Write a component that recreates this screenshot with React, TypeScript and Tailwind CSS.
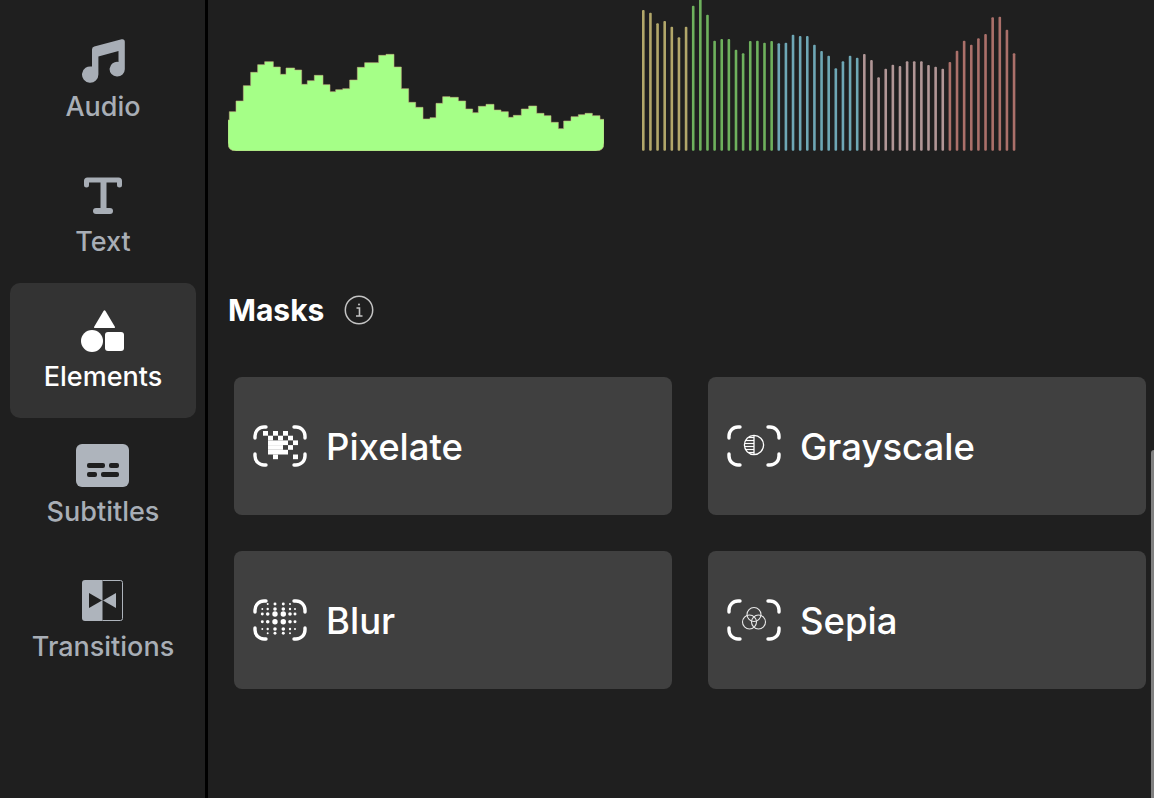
const wave: [number, number][] = [[28,240],[48,215],[70,183],[92,137],[113,97],[134,74],[160,65],[181,81],[198,103],[224,84],[245,90],[262,133],[283,122],[309,106],[330,134],[347,155],[368,149],[389,146],[412,120],[434,82],[476,68],[498,46],[522,43],[544,81],[566,146],[587,187],[609,202],[630,237],[648,233],[668,190],[690,170],[715,172],[737,183],[758,207],[775,218],[798,199],[822,193],[843,210],[865,215],[880,232],[904,226],[926,207],[950,198],[972,220],[993,227],[1015,247],[1031,266],[1053,243],[1075,230],[1095,224],[1117,220],[1140,227],[1152,238]];
const wx = (z: number) => ((z - 24) / 3).toFixed(2);
const wy = (z: number) => (40 + z / 3).toFixed(2);
const wavePath = `M0 143 V${wy(wave[0][1])} ` + wave.map(([x, t]) => `V${wy(t)} H${wx(x)}`).join(" ") + " V143 Q376 151 368 151 H8 Q0 151 0 143 Z";

const barTops = [30,38,70,63,80,112,80,17,-6,44,122,117,117,149,160,123,122,128,123,130,128,104,108,108,134,153,167,205,184,167,173,162,180,232,206,194,198,184,184,184,195,200,206,186,152,122,134,115,102,52,50,89,160];
const barColor = (i: number) => (i < 7 ? "#cdbf78" : i < 19 ? "#7ccb68" : i < 31 ? "#7cc0d0" : i < 43 ? "#cbacac" : "#c47f78");

const Music = () => (
  <svg width="60" height="48" viewBox="0 0 60 48" fill="#a8aeb6">
    <path d="M19 10.5 Q19 8.2 21.3 7.6 L48.6 0.3 Q51.8 -0.2 51.8 2.8 V30 A7.6 7.4 0 1 1 45.5 22.9 V12 L25.4 17.6 V35.5 A8.2 8.2 0 1 1 19 27.6 Z" />
  </svg>
);
const TIcon = () => (
  <svg width="60" height="48" viewBox="0 0 60 48" fill="none" stroke="#a8aeb6" strokeLinecap="round" strokeLinejoin="round">
    <path d="M13.5 11 V7 Q13.5 6 14.5 6 H45.5 Q46.5 6 46.5 7 V11" strokeWidth="5" />
    <path d="M30.5 6 V37" strokeWidth="6" strokeLinecap="butt" />
    <path d="M23 37 H37" strokeWidth="6" />
  </svg>
);
const Shapes = () => (
  <svg width="60" height="48" viewBox="0 0 60 48" fill="#ffffff">
    <path d="M32.5 2 L42 18 Q42.5 19 41 19 H22 Q20.5 19 21 18 L30.5 2 Q31.5 0.5 32.5 2 Z" />
    <circle cx="19" cy="32" r="11" />
    <rect x="32" y="23" width="19" height="19" rx="3" />
  </svg>
);
const Subs = () => (
  <svg width="60" height="48" viewBox="0 0 60 48">
    <rect x="3" y="0" width="53" height="43" rx="6" fill="#aeb4bc" />
    <g fill="#1f1f1f">
      <rect x="14" y="19" width="18" height="5" rx="2" />
      <rect x="36" y="19" width="10" height="5" rx="2" />
      <rect x="14" y="28" width="10" height="5" rx="2" />
      <rect x="28" y="28" width="18" height="5" rx="2" />
    </g>
  </svg>
);
const Trans = () => (
  <svg width="60" height="48" viewBox="0 0 60 48">
    <path d="M12 1 H29.5 V42 H12 Q9 42 9 39 V4 Q9 1 12 1 Z" fill="#aeb4bc" />
    <path d="M29.5 1.5 H47.5 Q49.5 1.5 49.5 3.5 V39.5 Q49.5 41.5 47.5 41.5 H29.5" fill="none" stroke="#aeb4bc" strokeWidth="1" />
    <path d="M16 14 V29 L29 21.5 Z" fill="#1f1f1f" />
    <path d="M43 14 V29 L30 21.5 Z" fill="#aeb4bc" />
  </svg>
);

const nav = [
  { label: "Audio", Icon: Music },
  { label: "Text", Icon: TIcon },
  { label: "Elements", Icon: Shapes, active: true },
  { label: "Subtitles", Icon: Subs },
  { label: "Transitions", Icon: Trans },
];

const Brackets = () => (
  <g fill="none" stroke="#fff" strokeWidth="3.4" strokeLinecap="round">
    <path d="M13 2 H11 A9 9 0 0 0 2 11 V13" />
    <path d="M41 2 H43 A9 9 0 0 1 52 11 V13" />
    <path d="M13 40 H11 A9 9 0 0 1 2 31 V29" />
    <path d="M41 40 H43 A9 9 0 0 0 52 31 V29" />
  </g>
);
const pixelCells: [number, number][] = [[0,0],[2,0],[4,0],[1,1],[3,1],[5,1],[1,2],[2,2],[3,2],[4,2],[6,2],[1,3],[2,3],[3,3],[5,3],[1,4],[2,4],[3,4],[4,4],[2,5],[6,5]];
const blurX = [9.3, 14.7, 22, 30.3, 37, 42];
const blurY = [5, 10, 15, 22.7, 30, 34.3];
const blurR = [0.8, 1.2, 2.7, 2.7, 1.2, 0.8];
const MaskIcon = ({ kind }: { kind: string }) => (
  <svg width="54" height="42" viewBox="0 0 54 42" className="shrink-0">
    <Brackets />
    {kind === "pixelate" && (
      <g fill="#fff">
        {pixelCells.map(([c, r]) => (
          <rect key={`${c}-${r}`} x={10 + c * 5} y={6 + r * 4.7} width="5" height="4.7" />
        ))}
      </g>
    )}
    {kind === "blur" && (
      <g fill="#fff">
        {blurX.flatMap((x, i) =>
          blurY.map((y, j) => {
            if ((i === 0 || i === 5) && (j === 0 || j === 5)) return null;
            return <circle key={`${i}-${j}`} cx={x} cy={y} r={Math.sqrt(blurR[i] * blurR[j])} />;
          })
        )}
      </g>
    )}
    {kind === "gray" && (
      <g>
        <circle cx="27" cy="20" r="9.6" fill="none" stroke="#fff" strokeWidth="1.3" />
        <path d="M27 10.5 V29.5" stroke="#fff" strokeWidth="1.3" />
        <g stroke="#fff" strokeWidth="1.2">
          {[12.5, 15.5, 18.5, 21.5, 24.5, 27.5].map((y) => (
            <path key={y} d={`M${y < 14 || y > 26 ? 22 : 18} ${y} H27`} />
          ))}
        </g>
      </g>
    )}
    {kind === "sepia" && (
      <g fill="none" stroke="#e8e8e8" strokeWidth="1.1">
        <circle cx="27" cy="15.5" r="7" />
        <circle cx="22.5" cy="23" r="7" />
        <circle cx="31.5" cy="23" r="7" />
      </g>
    )}
  </svg>
);

const masks = [
  { label: "Pixelate", kind: "pixelate" },
  { label: "Grayscale", kind: "gray" },
  { label: "Blur", kind: "blur" },
  { label: "Sepia", kind: "sepia" },
];

export default function App() {
  return (
    <div className="relative flex h-[798px] w-[1154px] overflow-hidden bg-[#1f1f1f] font-['Inter','Liberation_Sans',sans-serif]">
      <aside className="h-full w-[208px] shrink-0 border-r-[3px] border-black pl-[10px] pr-[9px] pt-[13px]">
        {nav.map(({ label, Icon, active }) => (
          <div
            key={label}
            className={`flex h-[135px] flex-col items-center rounded-[10px] pt-[26px] ${active ? "bg-[#333333] text-white" : "text-[#a8aeb6]"}`}
          >
            <div className="h-[48px]">
              <Icon />
            </div>
            <div className="text-[27px] font-medium leading-[40px]">{label}</div>
          </div>
        ))}
      </aside>
      <main className="flex-1 pl-[20px]">
        <div className="flex h-[151px] items-end gap-[38px]">
          <svg width="376" height="151" viewBox="0 0 376 151" className="shrink-0">
            <path d={wavePath} fill="#a5ff87" stroke="#c3b27f" strokeWidth="0.6" />
          </svg>
          <svg width="376" height="151" viewBox="0 0 376 151" className="shrink-0">
            {barTops.map((t, i) => (
              <rect
                key={i}
                x={(1.3 + i * 7.13 - 1.3).toFixed(2)}
                y={(t / 3).toFixed(2)}
                width="2.6"
                height={(150.7 - t / 3).toFixed(2)}
                rx="1"
                fill={barColor(i)}
                fillOpacity="0.85"
              />
            ))}
          </svg>
        </div>
        <div className="mb-[47px] mt-[139px] flex h-[40px] items-center gap-[20px]">
          <h2 className="text-[30px] font-bold leading-[40px] text-white">Masks</h2>
          <svg width="30" height="30" viewBox="0 0 30 30" fill="none" stroke="#c4c4c4">
            <circle cx="15" cy="15" r="13.7" strokeWidth="1.5" />
            <path d="M12.5 13 H15.5 V21 M12 21 H18.5" strokeWidth="1.6" />
            <circle cx="15" cy="9.5" r="1" fill="#c4c4c4" stroke="none" />
          </svg>
        </div>
        <div className="ml-[6px] grid w-[912px] grid-cols-2 gap-x-[36px] gap-y-[36px]">
          {masks.map((m) => (
            <div key={m.label} className="flex h-[138px] items-center gap-[19px] rounded-[8px] bg-[#404040] pl-[19px]">
              <MaskIcon kind={m.kind} />
              <span className="pt-[2px] text-[36.5px] font-medium leading-[44px] text-white">{m.label}</span>
            </div>
          ))}
        </div>
      </main>
      <div className="absolute right-0 top-[450px] h-[348px] w-[3px] rounded-tl-[3px] bg-[#808080]" />
    </div>
  );
}
